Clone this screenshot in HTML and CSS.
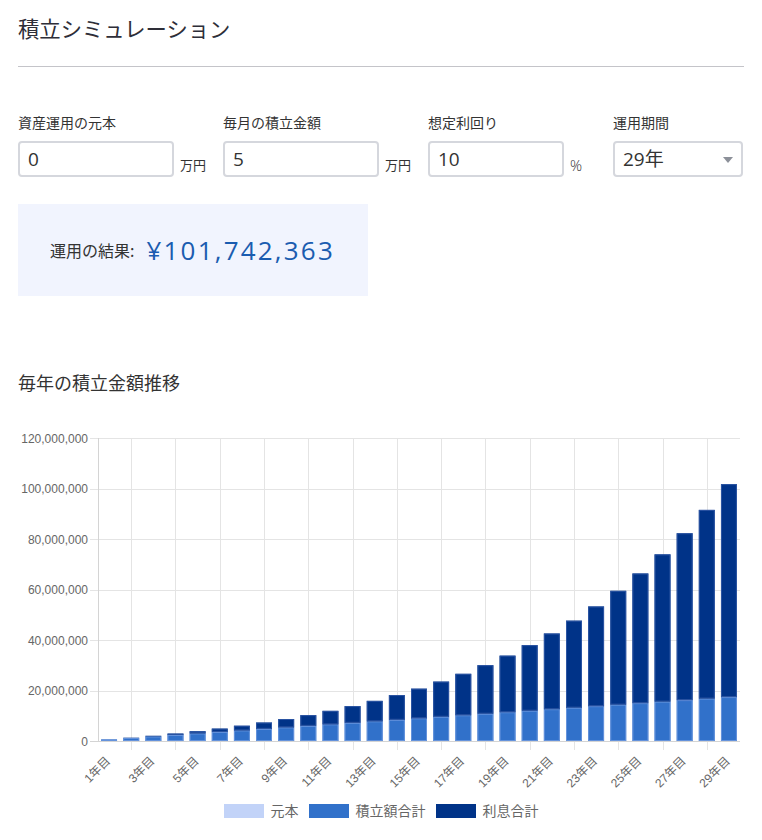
FILE: index.html
```html
<!DOCTYPE html>
<html lang="ja">
<head>
<meta charset="utf-8">
<title>積立シミュレーション</title>
<link rel="stylesheet" href="styles.css">
</head>
<body>
<div class="page">
  <h1 class="title">積立シミュレーション</h1>
  <hr class="divider">
  <div class="fields">
    <div class="field">
      <div class="field-label">資産運用の元本</div>
      <div class="field-row">
        <div class="input input-wide">0</div>
        <span class="unit">万円</span>
      </div>
    </div>
    <div class="field">
      <div class="field-label">毎月の積立金額</div>
      <div class="field-row">
        <div class="input input-wide">5</div>
        <span class="unit">万円</span>
      </div>
    </div>
    <div class="field">
      <div class="field-label">想定利回り</div>
      <div class="field-row">
        <div class="input input-mid">10</div>
        <span class="unit unit-pct">%</span>
      </div>
    </div>
    <div class="field">
      <div class="field-label">運用期間</div>
      <div class="field-row">
        <div class="input select">29年<span class="caret"></span></div>
      </div>
    </div>
  </div>
  <div class="result">
    <span class="result-label">運用の結果:</span>
    <span class="result-value">¥101,742,363</span>
  </div>
  <h2 class="chart-title">毎年の積立金額推移</h2>
  <div class="chart" id="chart"></div>
  <div class="legend">
    <div class="legend-item"><span class="swatch swatch-principal"></span><span>元本</span></div>
    <div class="legend-item"><span class="swatch swatch-contrib"></span><span>積立額合計</span></div>
    <div class="legend-item"><span class="swatch swatch-interest"></span><span>利息合計</span></div>
  </div>
</div>
<script src="script.js"></script>
</body>
</html>
```

FILE: styles.css
```css
html, body {
  margin: 0;
  padding: 0;
  background: #ffffff;
}
body {
  font-family: "Noto Sans CJK JP", "Noto Sans", sans-serif;
  color: #333333;
}
.page {
  padding: 0 18px;
  width: 726px;
}
.title {
  margin: 0;
  padding-top: 13px;
  font-size: 21.33px;
  line-height: 30px;
  font-weight: 400;
  color: #2e2e38;
}
.divider {
  margin: 23px 0 0 0;
  border: 0;
  border-top: 1px solid #c4c4c9;
  height: 0;
}
.fields {
  display: flex;
  gap: 17px;
  margin-top: 45px;
}
.field {
  display: flex;
  flex-direction: column;
}
.field-label {
  font-size: 14px;
  line-height: 20px;
  color: #333;
}
.field-row {
  display: flex;
  margin-top: 9px;
}
.input {
  box-sizing: border-box;
  height: 36px;
  border: 2px solid #d5d7dd;
  border-radius: 4px;
  padding: 0 8px;
  font-family: "Open Sans", "Noto Sans", "Noto Sans CJK JP", sans-serif;
  font-weight: 400;
  font-size: 19px;
  line-height: 32px;
  color: #333;
  background: #fff;
}
.input-wide { width: 156px; }
.input-mid { width: 136px; }
.select {
  width: 130px;
  display: flex;
  align-items: center;
  justify-content: space-between;
}
.caret {
  width: 0;
  height: 0;
  border-left: 5px solid transparent;
  border-right: 5px solid transparent;
  border-top: 6px solid #8c9099;
  margin-top: 2px;
}
.unit {
  width: 26px;
  margin-left: 6px;
  align-self: flex-end;
  font-size: 13px;
  line-height: 18px;
  margin-bottom: 3px;
  color: #333;
}
.unit-pct {
  font-family: "Open Sans", "Noto Sans", sans-serif;
  font-weight: 300;
  font-size: 15px;
}
.result {
  margin-top: 27px;
  width: 350px;
  height: 92px;
  box-sizing: border-box;
  padding-left: 32px;
  background: #f1f4fe;
  display: flex;
  align-items: center;
}
.result-label {
  font-size: 16px;
  color: #333;
}
.result-value {
  margin-left: 12px;
  font-family: "Open Sans", "Noto Sans", sans-serif;
  font-weight: 400;
  font-size: 26px;
  letter-spacing: 2.2px;
  color: #1a5cb0;
}
.chart-title {
  margin: 73px 0 0 0;
  font-size: 18px;
  line-height: 26px;
  font-weight: 400;
  color: #333;
}
.chart {
  margin-top: 25px;
  height: 370px;
}
.chart svg {
  display: block;
}
.axis-label {
  font-family: "Liberation Sans", "Noto Sans CJK JP", sans-serif;
  font-size: 12px;
  fill: #666666;
}
.legend {
  margin-top: 14px;
  display: flex;
  justify-content: center;
  gap: 10px;
  font-family: "Liberation Sans", "Noto Sans CJK JP", sans-serif;
  font-size: 14px;
  line-height: 14px;
  color: #666;
}
.legend-item {
  display: flex;
  align-items: center;
  gap: 7px;
}
.swatch {
  display: block;
  width: 40px;
  height: 14px;
}
.swatch-principal { background: #c2d3f8; }
.swatch-contrib { background: #3171ca; }
.swatch-interest { background: #003388; }
```

FILE: script.js
```javascript
(function () {
  var W = 726, H = 370;
  var L = 80, R = 722, Y0 = 321, YT = 18;
  var MAX = 120000000;
  var scale = (Y0 - YT) / MAX;
  var n = 29;
  var cw = (R - L) / n;
  var bw = cw * 0.72;
  var r = 0.1 / 12;

  function fmt(v) {
    return String(v).replace(/\B(?=(\d{3})+(?!\d))/g, ",");
  }

  var s = '<svg xmlns="http://www.w3.org/2000/svg" width="' + W + '" height="' + H + '" viewBox="0 0 ' + W + ' ' + H + '">';

  for (var k = 0; k <= 6; k++) {
    var y = Y0 - k * (Y0 - YT) / 6;
    var yy = Math.round(y) + 0.5;
    s += '<line x1="72" y1="' + yy + '" x2="' + R + '" y2="' + yy + '" stroke="' + (k === 0 ? '#d4d4d4' : '#e4e4e4') + '" stroke-width="1"/>';
    s += '<text class="axis-label" x="70" y="' + (y + 0.5) + '" text-anchor="end" dominant-baseline="central">' + fmt(k * 20000000) + '</text>';
  }

  for (var i = 1; i < n; i += 2) {
    var cx = Math.round(L + cw * (i + 0.5)) + 0.5;
    s += '<line x1="' + cx + '" y1="' + YT + '" x2="' + cx + '" y2="' + (Y0 + 9) + '" stroke="#e4e4e4" stroke-width="1"/>';
  }
  s += '<line x1="' + (L + 0.5) + '" y1="' + YT + '" x2="' + (L + 0.5) + '" y2="' + (Y0 + 1) + '" stroke="#d4d4d4" stroke-width="1"/>';

  for (var j = 0; j < n; j++) {
    var m = 12 * (j + 1);
    var total = 50000 * (Math.pow(1 + r, m) - 1) / r;
    var contrib = 600000 * (j + 1);
    var interest = total - contrib;
    var x = L + cw * (j + 0.5) - bw / 2;
    var hc = contrib * scale;
    var hi = interest * scale;
    var yc = Y0 - hc;
    var yi = yc - hi;
    s += '<rect x="' + x.toFixed(2) + '" y="' + yc.toFixed(2) + '" width="' + bw.toFixed(2) + '" height="' + hc.toFixed(2) + '" fill="#3171ca"/>';
    if (hc > 1) {
      s += '<rect x="' + (x + 0.5).toFixed(2) + '" y="' + (yc + 0.5).toFixed(2) + '" width="' + (bw - 1).toFixed(2) + '" height="' + (hc - 1).toFixed(2) + '" fill="none" stroke="#6593dc" stroke-width="1"/>';
    }
    s += '<rect x="' + x.toFixed(2) + '" y="' + yi.toFixed(2) + '" width="' + bw.toFixed(2) + '" height="' + hi.toFixed(2) + '" fill="#003388"/>';
    if (hi > 1) {
      s += '<rect x="' + (x + 0.5).toFixed(2) + '" y="' + (yi + 0.5).toFixed(2) + '" width="' + (bw - 1).toFixed(2) + '" height="' + (hi - 1).toFixed(2) + '" fill="none" stroke="#2c55a3" stroke-width="1"/>';
    }
  }

  s += '<line x1="' + L + '" y1="' + (Y0 + 0.5) + '" x2="' + R + '" y2="' + (Y0 + 0.5) + '" stroke="#d4d4d4" stroke-width="1"/>';

  for (var q = 0; q < n; q += 2) {
    var lx = L + cw * (q + 0.5) - 1;
    var ly = 339;
    s += '<text class="axis-label" x="' + lx.toFixed(2) + '" y="' + ly + '" text-anchor="end" dominant-baseline="central" transform="rotate(-45 ' + lx.toFixed(2) + ' ' + ly + ')">' + (q + 1) + '年目</text>';
  }

  s += '</svg>';
  document.getElementById('chart').innerHTML = s;
})();
```
